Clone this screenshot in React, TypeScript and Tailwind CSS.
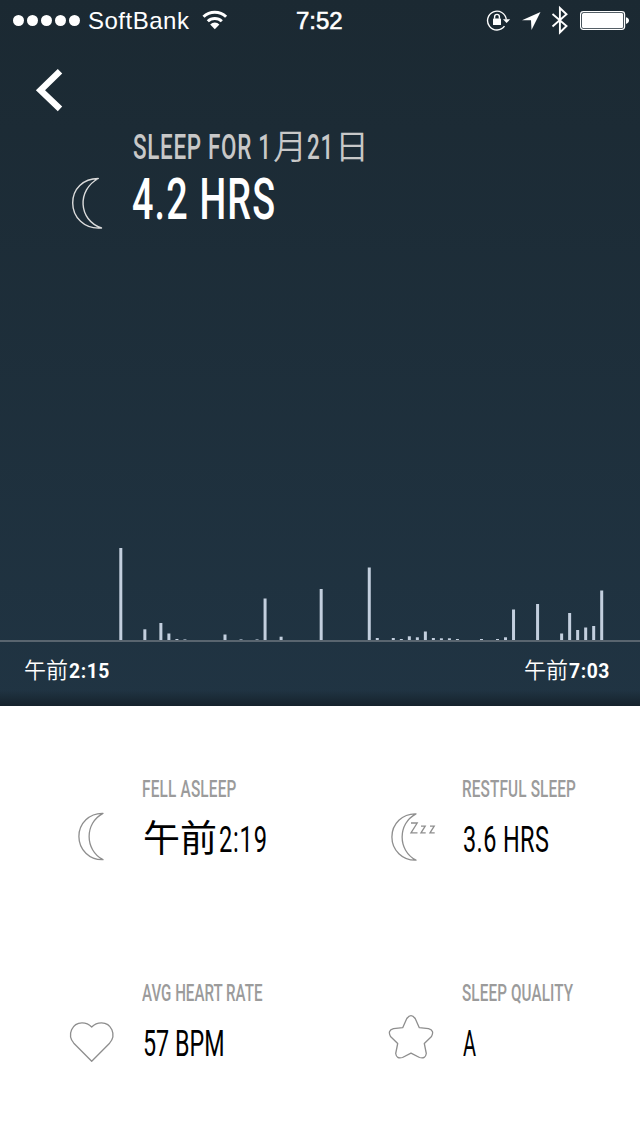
import React from 'react';

interface StatProps {
  label: string;
  labelClass: string;
  icon: React.ReactNode;
  children: React.ReactNode;
}

// [slot, height] - one slot is about five minutes of movement
const MOVEMENT: [number, number][] = [
  [0, 92], [3, 10.7], [5, 17], [6, 6.5], [7, 1], [8, 0.6], [13, 5.5], [15, 0.6], [17, 0.6],
  [18, 41.5], [20, 3.3], [25, 51], [31, 72.5], [32, 2], [34, 2], [35, 1], [36, 3.7], [37, 2.7],
  [38, 8.5], [39, 2], [40, 1.7], [41, 1.7], [42, 1], [45, 1], [47, 1], [48, 2.7], [49, 30.5],
  [52, 36], [55, 6.5], [56, 27], [57, 10], [58, 12.5], [59, 14], [60, 49.5],
];

const LATIN = "inline-block origin-left whitespace-nowrap font-['Roboto',sans-serif]";
const CJK = "shrink-0 whitespace-nowrap font-['Noto_Sans_CJK_JP',sans-serif]";

const StatusBar: React.FC = () => (
  <div className="flex h-10 shrink-0 items-center font-['Liberation_Sans',Arial,sans-serif] text-[24px] leading-[24px]">
    <div className="ml-[13px] flex w-[75px] gap-[3px]">
      {[0, 1, 2, 3, 4].map((i) => (
        <span key={i} className="size-[11px] rounded-full bg-white" />
      ))}
    </div>
    <span className="w-[114px] pt-0.5 tracking-[0.5px]">SoftBank</span>
    <svg className="w-[94px] shrink-0" height="20" viewBox="0 0 94 20" fill="none" stroke="white" strokeWidth="3">
      <path d="M1.500 6.800a16.200 16.200 0 0 1 22.600 0" />
      <path d="M5.800 11.300a10 10 0 0 1 14 0" />
      <path d="M12.800 19.200l-4.600-4.800a6.500 6.500 0 0 1 9.200 0z" fill="white" stroke="none" />
    </svg>
    <span className="pt-0.5 [-webkit-text-stroke:0.6px_white]">7:52</span>
    <svg className="ml-auto" width="154" height="40" viewBox="486 0 154 40" fill="none" stroke="white">
      <path d="M504.500 26.200A9.400 9.400 0 1 1 506.300 19.500" strokeWidth="1.4" />
      <path d="M503 19.200h7.200l-3.600 3.800z" fill="white" stroke="none" />
      <rect x="493" y="18.600" width="8" height="6.400" rx="0.6" fill="white" stroke="none" />
      <path d="M494.600 18.800v-2a2.400 2.400 0 0 1 4.800 0v2" strokeWidth="1.4" />
      <path d="M540.500 12l-18.500 8.200h9l.5 9.800z" fill="white" stroke="none" />
      <path d="M552.500 14l14 12-6.600 6.500V8l6.600 6.200-14 12.300" strokeWidth="1.9" />
      <rect x="580.600" y="11.600" width="44" height="17.800" rx="2.8" strokeWidth="1.2" />
      <rect x="582" y="13" width="41.200" height="15" rx="1.5" fill="white" stroke="none" />
      <path d="M626 17.300c4 .8 4 5.800 0 6.600z" fill="white" stroke="none" />
    </svg>
  </div>
);

const Moon: React.FC<{ x: number; y: number }> = ({ x, y }) => (
  <path
    transform={`translate(${x} ${y})`}
    d="M25 .8C11.500 .4.900 10.800.900 24C.900 37.200 11.500 47.600 25 47.200C6.500 37.500 6.500 10.500 25 .8z"
  />
);

const IconBox: React.FC<{ children: React.ReactNode }> = ({ children }) => (
  <svg className="mt-[100px] shrink-0" width="82" height="70" viewBox="60 100 82 70" fill="none" stroke="#8e8e8e" strokeWidth="1.3" strokeLinejoin="round">
    {children}
  </svg>
);

const Stat: React.FC<StatProps> = ({ label, labelClass, icon, children }) => (
  <div className="flex h-[204px] pl-[60px]">
    <IconBox>{icon}</IconBox>
    <div className="flex flex-col pt-[71px]">
      <div className="h-[24px] w-[150px] leading-[24px]">
        <span className={`${LATIN} text-[24px] font-medium leading-[24px] text-[#9b9b9b] ${labelClass}`}>{label}</span>
      </div>
      <div className="mt-[19px] flex h-10 items-baseline pl-px text-[37px] text-black">{children}</div>
    </div>
  </div>
);

const SleepChart: React.FC = () => (
  <svg className="mt-auto block shrink-0" width="640" height="102" viewBox="0 0 640 102">
    {MOVEMENT.map(([slot, height]) => (
      <rect key={slot} x={119.3 + slot * 8.015} y={100 - height} width="3" height={height} fill="#c3cfde" />
    ))}
    <rect y="100" width="640" height="2" fill="#59656f" />
  </svg>
);

const TimeLabel: React.FC<{ time: string }> = ({ time }) => (
  <div className="flex w-[86px] items-baseline">
    <span className={`${CJK} w-[45px] text-[22px] font-[350] leading-[18px]`}>午前</span>
    <span className={`${LATIN} scale-x-[0.92] text-[21px] font-bold leading-[24px] tracking-[0.6px]`}>{time}</span>
  </div>
);

const App: React.FC = () => {
  return (
    <div className="flex h-[1136px] w-[640px] flex-col overflow-hidden bg-white">
      <div className="flex h-[706px] shrink-0 flex-col bg-linear-to-b from-[#1b2932] to-[#203443] text-white">
        <StatusBar />

        <button className="ml-[35px] mt-[28px] block w-[30px]" aria-label="Back">
          <svg width="30" height="44" viewBox="0 0 30 44" fill="none" stroke="white" strokeWidth="6.4">
            <path d="M25 3.300L5.500 22.300l19.500 18.600" />
          </svg>
        </button>

        <div className="mt-[14px] flex pl-[70px]">
          <svg className="mt-[51px] shrink-0" width="34" height="54" viewBox="0 0 34 54" fill="none" stroke="#dcdcdc" strokeWidth="1.4" strokeLinejoin="round">
            <path d="M28.300 1.500C13 1.500 2.700 12 2.700 26C2.700 40 14 52.500 31.500 51C8 43 7 13 28.300 1.500z" />
          </svg>
          <div className="ml-[28px]">
            <div className="flex h-10 items-baseline text-[35px] leading-10 text-[#c8c8c8]">
              <span className="w-[141px] pl-px">
                <span className={`${LATIN} scale-x-[0.64] font-medium tracking-[1.1px]`}>SLEEP FOR 1</span>
              </span>
              <span className={`${CJK} w-[33px] text-[34px] font-[350] leading-[28px]`}>月</span>
              <span className="w-[29px] pl-px">
                <span className={`${LATIN} scale-x-[0.64] font-medium tracking-[1.1px]`}>21</span>
              </span>
              <span className={`${CJK} text-[34px] font-[350] leading-[28px]`}>日</span>
            </div>
            <div className={`${LATIN} mt-[4px] scale-x-[0.65] text-[58px] font-medium leading-[58px] tracking-[1.8px]`}>4.2 HRS</div>
          </div>
        </div>

        <SleepChart />

        <div className="flex h-16 shrink-0 justify-between bg-linear-to-t from-[#15222c] to-transparent to-25% pl-[24px] pr-[30px] pt-[17px]">
          <TimeLabel time="2:15" />
          <TimeLabel time="7:03" />
        </div>
      </div>

      <div className="grid grid-cols-2">
        <Stat label="FELL ASLEEP" labelClass="scale-x-[0.64] tracking-[0.3px]" icon={<Moon x={78} y={106.500} />}>
          <span className={`${CJK} w-[76px] leading-[28px]`}>午前</span>
          <span className={`${LATIN} scale-x-[0.64] leading-10 tracking-[1.2px]`}>2:19</span>
        </Stat>
        <Stat
          label="RESTFUL SLEEP"
          labelClass="scale-x-[0.64] tracking-[0.2px]"
          icon={
            <>
              <Moon x={71} y={107} />
              <path strokeLinejoin="miter" d="M91 117h6.200l-6.200 9.800h6.500M101 120.200h4.200l-4.200 6.600h4.700M110 120.200h4.200l-4.200 6.600h4.700" />
            </>
          }
        >
          <span className={`${LATIN} scale-x-[0.635] leading-10 tracking-[0.6px]`}>3.6 HRS</span>
        </Stat>
        <Stat
          label="AVG HEART RATE"
          labelClass="scale-x-[0.63]"
          icon={<path d="M91.700 151.300L73.800 133.200C66.500 124.500 72.500 112.800 82 112.800Q87.800 112.800 91.700 117Q95.600 112.800 101.500 112.800C111 112.800 117 124.500 109.600 133.200z" />}
        >
          <span className={`${LATIN} scale-x-[0.63] leading-10`}>57 BPM</span>
        </Stat>
        <Stat
          label="SLEEP QUALITY"
          labelClass="scale-x-[0.635] tracking-[0.2px]"
          icon={
            <path d="M86.800 108.500Q91 102.700 95.200 108.500L99.300 117.700L108.500 118.600Q114.800 120.500 111.500 126.500L104.300 133.500L106.300 143.500Q105.500 149.300 99.500 147.500L91 143.200L82.500 147.500Q76.500 149.300 75.700 143.500L77.700 133.500L70.500 126.500Q67.200 120.500 73.500 118.600L82.700 117.700z" />
          }
        >
          <span className={`${LATIN} scale-x-[0.54] leading-10`}>A</span>
        </Stat>
      </div>
    </div>
  );
};

export default App;
